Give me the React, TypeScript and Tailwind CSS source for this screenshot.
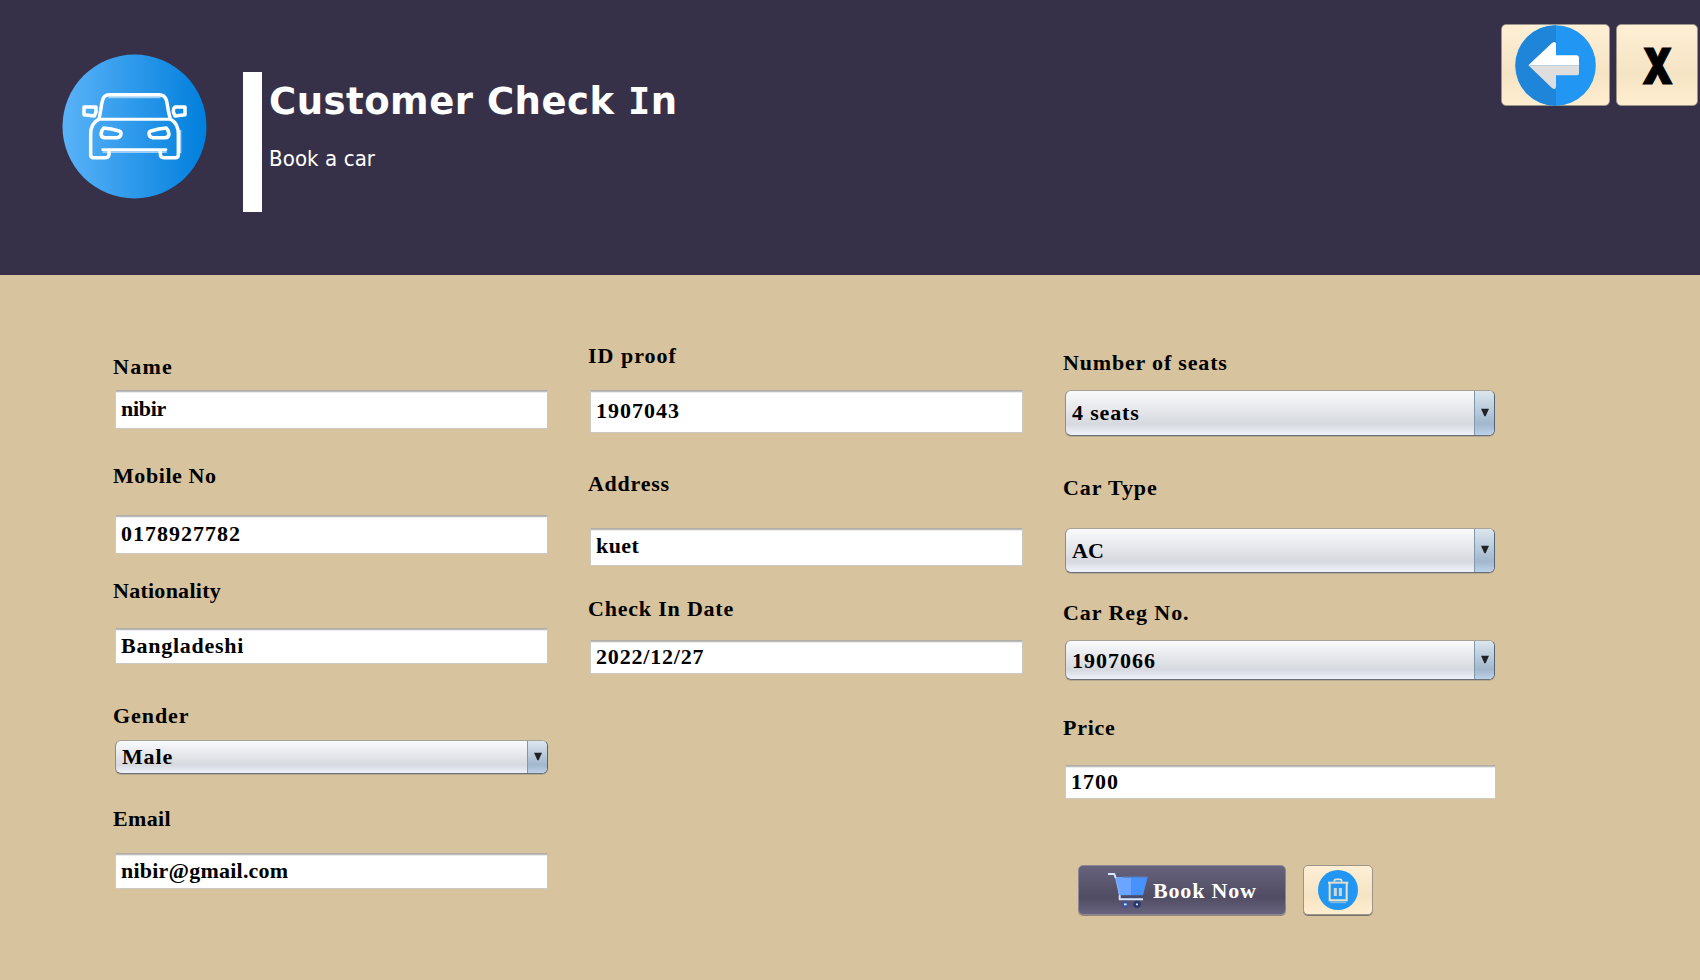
import type { ReactNode } from "react";

function Label({ children, className }: { children: ReactNode; className: string }) {
  return (
    <label className={`block h-[25px] whitespace-nowrap text-[22px] leading-[25px] text-black ${className}`}>
      {children}
    </label>
  );
}

function Field({ children, className }: { children: ReactNode; className: string }) {
  return (
    <div
      className={`ml-[2px] border border-t-[#b0ada6] border-r-[#cbc8c2] border-b-[#ccc9c3] border-l-[#d0cabc] bg-white pl-[5px] text-[22px] leading-[25px] whitespace-nowrap text-black shadow-[inset_0_1px_0_#bdbdbd,inset_0_2px_0_#ececec] ${className}`}
    >
      {children}
    </div>
  );
}

function Arrow() {
  return (
    <svg width="8" height="9" viewBox="0 0 8 9">
      <path d="M0 0.8H8L4.6 8.3H3.4Z" fill="#1f2226" />
    </svg>
  );
}

function Select({ value, box, text, tracking }: { value: string; box: string; text: string; tracking: string }) {
  return (
    <div
      className={`ml-[2px] flex overflow-hidden rounded-[6px] border border-t-[#a5a296] border-r-[#4f6476] border-b-[#6c6f78] border-l-[#8b8d90] bg-linear-to-b from-[#fafafc] via-[#d6d9df] via-75% to-[#eff2fa] shadow-[0_1px_0_#b5a98f] ${box}`}
    >
      <span className={`flex-1 pl-[6px] text-[22px] leading-[25px] whitespace-nowrap text-black ${text} ${tracking}`}>
        {value}
      </span>
      <span className="flex w-[20px] items-center justify-center border-l border-l-[#8297aa] bg-linear-to-b from-[#dce6ee] via-[#a2b7cd] via-75% to-[#bcd2e8] pb-[2px] pl-px">
        <Arrow />
      </span>
    </div>
  );
}

function CarLogo() {
  return (
    <svg className="mt-[54px] ml-[62px] shrink-0" width="145" height="145" viewBox="66 72 435 435" fill="none">
      <defs>
        <linearGradient id="sky" x1="0" x2="1" y1="0" y2="0">
          <stop offset="0" stopColor="#5ab3f8" />
          <stop offset="1" stopColor="#007fdd" />
        </linearGradient>
      </defs>
      <circle cx="283.500" cy="289.500" r="216" fill="url(#sky)" />
      <path d="M205 202H362M188 366H380M421 300V370" stroke="#9dcff8" strokeWidth="6" />
      <g stroke="#fff" strokeWidth="10.500" strokeLinecap="round" strokeLinejoin="round">
        <path d="M178 262C182 245 184 222 188 210C191 199 197 194 207 194H358C369 194 375 199 379 210C383 224 384 245 390 262" />
        <path d="M176 268H392" strokeWidth="9" />
        <path d="M176 268C160 276 152 290 152 312V374Q152 383 161 383H197Q207 383 207 373V362" />
        <path d="M392 268C406 276 415 290 415 312V374Q415 383 406 383H371Q361 383 361 373V362" />
        <path d="M188 359H378" strokeWidth="8" />
        <path d="M132 231H168V246L163 258L132 254Z" />
        <path d="M401 236L405 231H435V254L405 258L400 246Z" />
        <path d="M191 294C186 299 184 306 183 312Q184 323 195 323H232Q243 322 243 310Q243 305 237 303Q214 296 191 294Z" />
        <path d="M379 294C384 299 386 306 387 312Q386 323 375 323H338Q327 322 327 310Q327 305 333 303Q356 296 379 294Z" />
      </g>
    </svg>
  );
}

function BackIcon() {
  return (
    <svg width="81" height="81" viewBox="75 44 243 243">
      <circle cx="196.500" cy="165.500" r="121" fill="#2196f3" />
      <path d="M198 44.500A121 121 0 0 0 198 286.500Z" fill="#1e85d8" />
      <path d="M115 165L186 98Q198 90 198 104V135H259Q267 135 267 143V165Z" fill="#fff" />
      <path d="M115 165L186 233Q198 241 198 227V195H259Q267 195 267 187V165Z" fill="#dedede" />
    </svg>
  );
}

function CartIcon() {
  return (
    <svg className="shrink-0" width="42" height="37" viewBox="142 66 126 111" fill="none">
      <path d="M168 81H216V136H178Z" fill="#6aa5ff" />
      <path d="M216 81H264L250 136H216Z" fill="#4792ff" />
      <path d="M190 81H264" stroke="#5877b5" strokeWidth="4" />
      <path d="M145 72H164L168 84" stroke="#d6e6ff" strokeWidth="6" strokeLinejoin="round" />
      <path d="M168 84L180 138" stroke="#8fbaff" strokeWidth="3" />
      <path d="M180 136V148H250" stroke="#d6e6ff" strokeWidth="6" strokeLinejoin="round" />
      <path d="M184 140H248" stroke="#454a72" strokeWidth="5" />
      <circle cx="197" cy="163" r="11" fill="#43549a" />
      <circle cx="232" cy="163" r="11" fill="#28376f" />
      <path d="M193 163H201M229 163H235" stroke="#d6e6ff" strokeWidth="5" />
    </svg>
  );
}

function TrashIcon() {
  return (
    <svg width="40" height="40" viewBox="774 60 120 120" fill="none">
      <circle cx="834" cy="120" r="60" fill="#2196f3" />
      <path d="M804 98H865" stroke="#e4dfca" strokeWidth="6" />
      <path d="M823 95V92Q823 88 828 88H840Q845 88 845 92V95" stroke="#e9e2cc" strokeWidth="5" />
      <path d="M809 99V151H860V99" stroke="#eee3c8" strokeWidth="6" />
      <path d="M811 157H858" stroke="#84bce0" strokeWidth="5" />
      <path d="M826 114V138M841 114V138" stroke="#c9dadf" strokeWidth="9" />
    </svg>
  );
}

const cream =
  "flex items-center justify-center rounded-[5px] border border-[#9c968a] bg-linear-to-b from-[#ffefd5] via-[#f5e4c4] via-60% to-[#ffedcf]";

export default function App() {
  return (
    <div className="flex h-[980px] w-[1700px] flex-col overflow-hidden bg-[#d7c39d] font-['Liberation_Serif',serif] font-bold">
      <header className="flex h-[275px] shrink-0 items-start bg-[#363148]">
        <CarLogo />
        <div className="mt-[72px] ml-[36px] h-[140px] w-[19px] shrink-0 bg-white" />
        <div className="mt-[81px] ml-[7px] flex-1 text-white">
          <h1 className="h-[42px] font-['DejaVu_Sans',sans-serif] text-[37px] leading-[42px] font-bold tracking-[0.5px] whitespace-nowrap">
            Customer Check <span className="font-['DejaVu_Sans_Mono',monospace]">I</span>n
          </h1>
          <p className="mt-[22px] font-['DejaVu_Sans_Condensed','DejaVu_Sans',sans-serif] text-[22px] leading-[28px] font-normal tracking-[0.1px] whitespace-nowrap [font-stretch:condensed]">
            Book a car
          </p>
        </div>
        <div className="mt-[24px] mr-[2px] flex gap-[6px]">
          <button className={`h-[82px] w-[109px] ${cream}`}>
            <BackIcon />
          </button>
          <button className={`h-[82px] w-[82px] ${cream}`}>
            <span className="inline-block scale-x-[0.78] pt-[2px] pl-[1px] font-['Inter',sans-serif] text-[50px] leading-none font-black text-black [-webkit-text-stroke:1.2px_black]">
              X
            </span>
          </button>
        </div>
      </header>

      <main className="flex gap-[42px] pl-[113px]">
        <section className="w-[433px] pt-[79px] [&>div]:w-[433px]">
          <Label className="tracking-[1.3px]">Name</Label>
          <Field className="mt-[11px] h-[39px] pt-[5px] tracking-[-0.3px]">nibir</Field>
          <Label className="mt-[34px] tracking-[0.58px]">Mobile No</Label>
          <Field className="mt-[27px] h-[39px] pt-[5px] tracking-[1px]">0178927782</Field>
          <Label className="mt-[24px] tracking-[0.26px]">Nationality</Label>
          <Field className="mt-[25px] h-[36px] pt-[4px] tracking-[0.75px]">Bangladeshi</Field>
          <Label className="mt-[39px] tracking-[0.93px]">Gender</Label>
          <Select value="Male" box="mt-[12px] h-[34px]" text="pt-[3px]" tracking="tracking-[0.85px]" />
          <Label className="mt-[32px] tracking-[0.37px]">Email</Label>
          <Field className="mt-[22px] h-[36px] pt-[4px] tracking-[0.22px]">nibir@gmail.com</Field>
        </section>

        <section className="w-[433px] pt-[68px] [&>div]:w-[433px]">
          <Label className="tracking-[1px]">ID proof</Label>
          <Field className="mt-[22px] h-[43px] pt-[7px] tracking-[1px]">1907043</Field>
          <Label className="mt-[38px] tracking-[0.73px]">Address</Label>
          <Field className="mt-[32px] h-[38px] pt-[4px] tracking-[0.43px]">kuet</Field>
          <Label className="mt-[30px] tracking-[0.8px]">Check In Date</Label>
          <Field className="mt-[19px] h-[34px] pt-[3px] tracking-[0.82px]">2022/12/27</Field>
        </section>

        <section className="w-[433px] pt-[75px]">
          <Label className="tracking-[0.82px]">Number of seats</Label>
          <Select value="4 seats" box="mt-[15px] h-[46px] w-[430px]" text="pt-[9px]" tracking="tracking-[0.83px]" />
          <Label className="mt-[39px] tracking-[0.9px]">Car Type</Label>
          <Select value="AC" box="mt-[28px] h-[45px] w-[430px]" text="pt-[9px]" tracking="tracking-[0.1px]" />
          <Label className="mt-[27px] tracking-[0.93px]">Car Reg No.</Label>
          <Select value="1907066" box="mt-[15px] h-[40px] w-[430px]" text="pt-[7px]" tracking="tracking-[1px]" />
          <Label className="mt-[35px] tracking-[0.72px]">Price</Label>
          <Field className="mt-[25px] h-[34px] w-[431px] pt-[3px] tracking-[1px]">1700</Field>
          <div className="mt-[66px] ml-[15px] flex gap-[17px]">
            <button className="flex h-[50px] w-[208px] items-start rounded-[5px] border border-[#8d8693] bg-linear-to-b from-[#68637d] via-[#504c63] via-65% to-[#68637e] pl-[28px] shadow-[0_1px_0_#8f8577]">
              <span className="mt-[6px] flex">
                <CartIcon />
              </span>
              <span className="mt-[12px] ml-[4px] text-[22px] leading-[25px] tracking-[0.83px] whitespace-nowrap text-white">
                Book Now
              </span>
            </button>
            <button className={`h-[50px] w-[70px] shadow-[0_1px_0_#77716f] ${cream}`}>
              <TrashIcon />
            </button>
          </div>
        </section>
      </main>
    </div>
  );
}
